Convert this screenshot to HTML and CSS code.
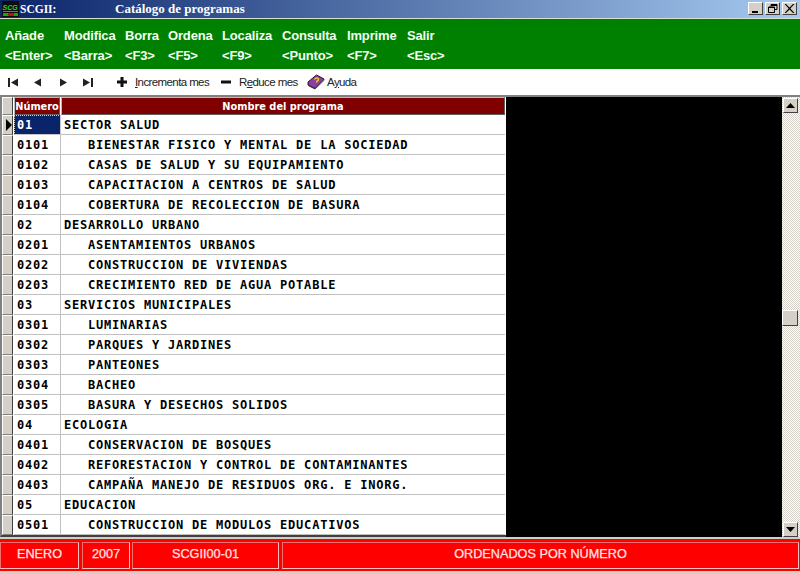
FILE: index.html
```html
<!DOCTYPE html>
<html lang="es">
<head>
<meta charset="utf-8">
<title>Catálogo de programas</title>
<link rel="stylesheet" href="styles.css">
</head>
<body>
<div class="window">
  <header class="titlebar">
    <svg class="applogo" width="17" height="16" viewBox="0 0 17 16"><rect width="17" height="16" fill="#0c0c0c"/><rect x="1" y="10" width="15" height="1" fill="#1b1"/><rect x="1" y="12" width="5" height="3" fill="#1a1"/><rect x="6" y="12" width="6" height="3" fill="#b11"/><rect x="12" y="12" width="4" height="3" fill="#1a1"/><text x="0.5" y="9" class="applogo-text">SCG</text></svg>
    <span class="app-name">SCGII:</span>
    <span class="win-title">Catálogo de programas</span>
    <div class="win-buttons">
      <span class="win-btn"><svg width="10" height="9" viewBox="0 0 10 9"><rect x="1" y="7" width="6" height="2" fill="#000"/></svg></span>
      <span class="win-btn"><svg width="10" height="9" viewBox="0 0 10 9"><path d="M3 .5h6v5h-2M3 .5v2M.5 3h6v5.500h-6z M.5 3.500h6M3 1.500h6" fill="none" stroke="#000"/></svg></span>
      <span class="win-btn"><svg width="10" height="9" viewBox="0 0 10 9"><path d="M1 0l3.500 3.500L8 0h1.500L5.300 4.500 9.500 9H8L4.500 5.500 1 9H-.5l4.200-4.500L-.5 0z" fill="#000"/></svg></span>
    </div>
  </header>

  <nav class="menu">
    <div class="m m1"><span>Añade</span><span>&lt;Enter&gt;</span></div>
    <div class="m m2"><span>Modifica</span><span>&lt;Barra&gt;</span></div>
    <div class="m m3"><span>Borra</span><span>&lt;F3&gt;</span></div>
    <div class="m m4"><span>Ordena</span><span>&lt;F5&gt;</span></div>
    <div class="m m5"><span>Localiza</span><span>&lt;F9&gt;</span></div>
    <div class="m m6"><span>Consulta</span><span>&lt;Punto&gt;</span></div>
    <div class="m m7"><span>Imprime</span><span>&lt;F7&gt;</span></div>
    <div class="m m8"><span>Salir</span><span>&lt;Esc&gt;</span></div>
  </nav>

  <div class="toolbar">
    <svg class="nav n1" width="10" height="9" viewBox="0 0 10 9"><path d="M0 0h2v9H0zM10 .5v8L3 4.500z" fill="#222"/></svg>
    <svg class="nav n2" width="9" height="9" viewBox="0 0 9 9"><path d="M8 .5v8L1 4.500z" fill="#222"/></svg>
    <svg class="nav n3" width="9" height="9" viewBox="0 0 9 9"><path d="M1 .5v8l7-4z" fill="#222"/></svg>
    <svg class="nav n4" width="10" height="9" viewBox="0 0 10 9"><path d="M0 .5v8l7-4zM8 0h2v9H8z" fill="#222"/></svg>
    <svg class="tool-ic" width="10" height="10" viewBox="0 0 10 10"><path d="M3.500 0h3v3.500H10v3H6.500V10h-3V6.500H0v-3h3.500z" fill="#111"/></svg>
    <span class="tool-t inc"><u>I</u>ncrementa mes</span>
    <svg class="tool-ic" width="10" height="10" viewBox="0 0 10 10"><rect y="3.500" width="10" height="3" fill="#111"/></svg>
    <span class="tool-t red">R<u>e</u>duce mes</span>
    <svg class="book" width="18" height="16" viewBox="0 0 18 16"><path d="M1 8L9.500 1l7.500 4-9 9.500L1 11z" fill="#8a3fa0" stroke="#2c1038"/><path d="M2 11.500l6 3 9-9.500v1.500l-9 8.500-6-3z" fill="#eee" stroke="#2c1038" stroke-width=".7"/><path d="M7.500 5.500c1-2 4-2 4 0 0 1.500-2 1-2 3" fill="none" stroke="#f2c230" stroke-width="1.500"/></svg>
    <span class="tool-t ayu">A<u>y</u>uda</span>
  </div>

  <main class="content">
    <section class="grid">
      <div class="head">
        <div class="sel"></div>
        <div class="h h-num">Número</div>
        <div class="h h-name">Nombre del programa</div>
      </div>
      <div class="row"><div class="sel cur"><i></i></div><div class="num active">01</div><div class="name">SECTOR SALUD</div></div>
      <div class="row"><div class="sel"></div><div class="num">0101</div><div class="name sub">BIENESTAR FISICO Y MENTAL DE LA SOCIEDAD</div></div>
      <div class="row"><div class="sel"></div><div class="num">0102</div><div class="name sub">CASAS DE SALUD Y SU EQUIPAMIENTO</div></div>
      <div class="row"><div class="sel"></div><div class="num">0103</div><div class="name sub">CAPACITACION A CENTROS DE SALUD</div></div>
      <div class="row"><div class="sel"></div><div class="num">0104</div><div class="name sub">COBERTURA DE RECOLECCION DE BASURA</div></div>
      <div class="row"><div class="sel"></div><div class="num">02</div><div class="name">DESARROLLO URBANO</div></div>
      <div class="row"><div class="sel"></div><div class="num">0201</div><div class="name sub">ASENTAMIENTOS URBANOS</div></div>
      <div class="row"><div class="sel"></div><div class="num">0202</div><div class="name sub">CONSTRUCCION DE VIVIENDAS</div></div>
      <div class="row"><div class="sel"></div><div class="num">0203</div><div class="name sub">CRECIMIENTO RED DE AGUA POTABLE</div></div>
      <div class="row"><div class="sel"></div><div class="num">03</div><div class="name">SERVICIOS MUNICIPALES</div></div>
      <div class="row"><div class="sel"></div><div class="num">0301</div><div class="name sub">LUMINARIAS</div></div>
      <div class="row"><div class="sel"></div><div class="num">0302</div><div class="name sub">PARQUES Y JARDINES</div></div>
      <div class="row"><div class="sel"></div><div class="num">0303</div><div class="name sub">PANTEONES</div></div>
      <div class="row"><div class="sel"></div><div class="num">0304</div><div class="name sub">BACHEO</div></div>
      <div class="row"><div class="sel"></div><div class="num">0305</div><div class="name sub">BASURA Y DESECHOS SOLIDOS</div></div>
      <div class="row"><div class="sel"></div><div class="num">04</div><div class="name">ECOLOGIA</div></div>
      <div class="row"><div class="sel"></div><div class="num">0401</div><div class="name sub">CONSERVACION DE BOSQUES</div></div>
      <div class="row"><div class="sel"></div><div class="num">0402</div><div class="name sub">REFORESTACION Y CONTROL DE CONTAMINANTES</div></div>
      <div class="row"><div class="sel"></div><div class="num">0403</div><div class="name sub">CAMPAÑA MANEJO DE RESIDUOS ORG. E INORG.</div></div>
      <div class="row"><div class="sel"></div><div class="num">05</div><div class="name">EDUCACION</div></div>
      <div class="row"><div class="sel"></div><div class="num">0501</div><div class="name sub">CONSTRUCCION DE MODULOS EDUCATIVOS</div></div>
    </section>
    <div class="void"></div>
    <aside class="scroll">
      <span class="sb-btn sb-up"><svg width="9" height="5" viewBox="0 0 9 5"><path d="M4.500 0L9 5H0z" fill="#000"/></svg></span>
      <span class="thumb"></span>
      <span class="sb-btn sb-down"><svg width="9" height="5" viewBox="0 0 9 5"><path d="M0 0h9L4.500 5z" fill="#000"/></svg></span>
    </aside>
  </main>

  <footer class="status">
    <div class="status-inner">
      <div class="cell c1">ENERO</div>
      <div class="cell c2">2007</div>
      <div class="cell c3">SCGII00-01</div>
      <div class="cell c4">ORDENADOS POR NÚMERO</div>
    </div>
  </footer>
</div>
</body>
</html>
```
FILE: styles.css
```css
* { box-sizing: border-box; }
html, body { margin: 0; padding: 0; }
body { width: 800px; height: 574px; overflow: hidden; background: #d4d0c8; font-family: "Liberation Sans", Arial, sans-serif; }
.window { width: 800px; height: 574px; display: flex; flex-direction: column; }

.titlebar { height: 19px; flex: none; display: flex; align-items: center; padding: 0 3px 1px 2px; background: linear-gradient(90deg, #0a246a 0%, #a6caf0 100%); border-bottom: 1px solid #d4e0d0; color: #fff; }
.applogo { flex: none; margin-right: 1px; }
.applogo-text { font: italic bold 7px "Liberation Sans", sans-serif; fill: #2d2; }
.app-name { font: bold 11.500px "Liberation Serif", serif; width: 95px; }
.win-title { font: bold 13px "Liberation Serif", serif; }
.win-buttons { margin-left: auto; display: flex; gap: 2px; }
.win-btn { width: 15px; height: 13px; background: #d4d0c8; border: 1px solid; border-color: #fff #404040 #404040 #fff; display: flex; align-items: center; justify-content: center; }

.menu { height: 50px; flex: none; background: #008000; color: #f2fff2; display: flex; font-size: 13px; letter-spacing: -.15px; font-weight: bold; padding-left: 5px; }
.m { display: flex; flex-direction: column; padding-top: 7px; line-height: 20px; }
.m1 { width: 59px; }
.m2 { width: 61px; }
.m3 { width: 43px; }
.m4 { width: 54px; }
.m5 { width: 60px; }
.m6 { width: 65px; }
.m7 { width: 60px; }

.toolbar { height: 26px; flex: none; background: #fff; display: flex; align-items: center; padding: 0 0 0 8px; font-size: 11.500px; color: #222; letter-spacing: -.6px; }
.n1, .n3 { margin-right: 15px; }
.n2 { margin-right: 17px; }
.n4 { margin-right: 24px; }
.tool-ic { flex: none; margin-right: 8px; }
.inc { width: 86px; }
.red { width: 68px; }
.book { flex: none; margin-right: 2px; }
.tool-t { white-space: nowrap; }

.content { flex: none; height: 442px; background: #000; display: flex; border-top: 2px solid #808080; }
.grid { width: 506px; flex: none; background: #fff; border-left: 2px solid #808080; border-bottom: 2px solid #404040; }
.head { display: flex; height: 18px; background: #fff; }
.sel { width: 11px; flex: none; background: #d4d0c8; border: 1px solid; border-color: #fff #404040 #808080 #fff; }
.head .sel { height: 18px; margin-right: 1px; }
.h { background: #800000; color: #fff; font: bold 9.800px/17px "DejaVu Sans", sans-serif; text-align: center; border: 1px solid; border-color: #bbb #606060 #606060 #bbb; height: 18px; white-space: nowrap; overflow: hidden; }
.h-num { width: 46px; margin-right: 1px; }
.h-name { width: 444px; }
.row { display: flex; height: 20px; background: #fff; }
.row .sel { margin-right: 1px; position: relative; }
.cur i { position: absolute; left: 3px; top: 3px; border-left: 6px solid #000; border-top: 6px solid transparent; border-bottom: 6px solid transparent; }
.num, .name { font: bold 12px/21px "DejaVu Sans Mono", monospace; letter-spacing: .78px; color: #000; border-bottom: 1px solid #c0c0c0; white-space: pre; height: 20px; }
.num { width: 47px; padding-left: 3px; border-right: 1px solid #c0c0c0; }
.num.active { background: #0a246a; color: #fff; outline: 1px dotted #ccc; outline-offset: -1px; }
.name { width: 444px; padding-left: 3px; }
.name.sub { padding-left: 27px; }
.void { flex: 1; background: #000; }
.scroll { width: 18px; flex: none; display: flex; flex-direction: column; background-color: #fff; background-image: conic-gradient(#d4d0c8 25%, #fff 0 50%, #d4d0c8 0 75%, #fff 0); background-size: 2px 2px; }
.sb-btn { width: 15px; height: 15px; flex: none; margin-left: 1px; background: #d4d0c8; border: 1px solid; border-color: #fff #404040 #404040 #fff; display: flex; align-items: center; justify-content: center; }
.sb-up { margin-top: 1px; }
.sb-down { margin-top: auto; }
.thumb { width: 16px; height: 16px; flex: none; margin-top: 197px; background: #d4d0c8; border: 1px solid; border-color: #fff #404040 #404040 #fff; }

.status { flex: 1; background: #d4d0c8; padding: 2px 0 3px; }
.status-inner { height: 32px; background: #f00; display: flex; gap: 2px; padding: 3px 1px 2px 0; }
.cell { color: #ffe4e4; font-size: 12.700px; line-height: 22px; text-align: center; border: 1px solid; border-color: #f07070 #ffc0c0 #ffc0c0 #f07070; -webkit-text-stroke: .25px #ffe4e4; }
.c1 { width: 79px; margin-right: 1px; }
.c2 { width: 48px; }
.c3 { width: 147px; margin-right: 1px; }
.c4 { flex: 1; }
```
